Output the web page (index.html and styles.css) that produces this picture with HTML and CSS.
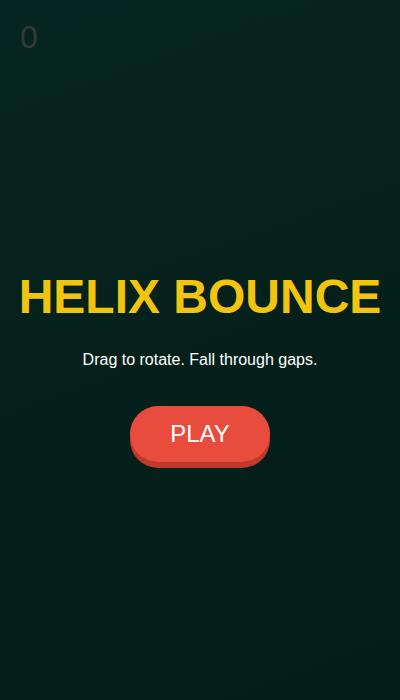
FILE: index.html
```html
<!DOCTYPE html>
<html lang="en">
<head>
  <meta charset="UTF-8">
  <meta name="viewport" content="width=device-width, initial-scale=1.0">
  <title>Helix Bounce</title>
  <link rel="stylesheet" href="styles.css">
</head>
<body>
  <div class="game">
    <!-- HUD -->
    <div class="score">0</div>

    <!-- Start screen -->
    <div class="menu">
      <h1 class="title">HELIX BOUNCE</h1>
      <p class="hint">Drag to rotate. Fall through gaps.</p>
      <button class="play-btn" type="button">PLAY</button>
    </div>
  </div>
</body>
</html>
```

FILE: styles.css
```css
/* Global */
html, body { height: 100%; }
body {
  margin: 0;
  background: #05201c;
  font-family: 'Liberation Sans', Arial, sans-serif;
  color: #fff;
  overflow: hidden;
}

/* Game area */
.game {
  position: relative;
  height: 100%;
  background: linear-gradient(160deg, #072520 0%, #05201b 55%, #041d19 100%);
}

/* Score counter */
.score {
  position: absolute;
  top: 19px;
  left: 20px;
  font-size: 32px;
  color: #333a37;
}

/* Start menu */
.menu {
  height: 100%;
  box-sizing: border-box;
  padding-top: 30px;
  display: flex;
  flex-direction: column;
  align-items: center;
  justify-content: center;
  text-align: center;
}
.title {
  margin: 0 0 27px;
  font-size: 48px;
  font-weight: bold;
  color: #f1c40f;
}
.hint {
  margin: 0 0 37px;
  font-size: 16px;
}
.play-btn {
  width: 140px;
  height: 56px;
  border: none;
  border-radius: 28px;
  background: #e74c3c;
  box-shadow: 0 6px 0 #c0392b;
  color: #fff;
  font-family: inherit;
  font-size: 24px;
  cursor: pointer;
}
```
